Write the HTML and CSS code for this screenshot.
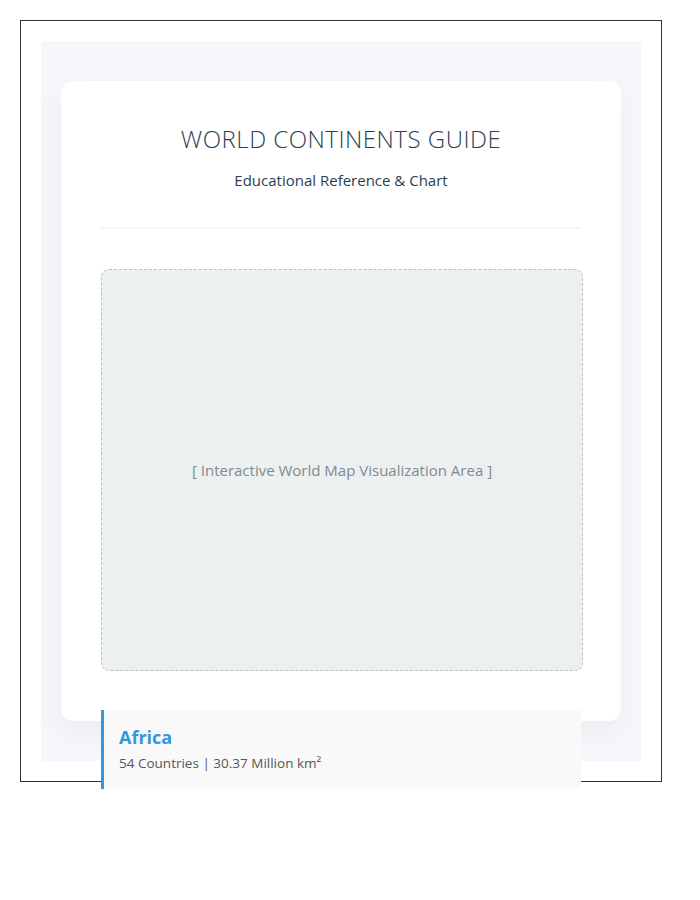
FILE: index.html
```html
<!DOCTYPE html>
<html lang="en">
<head>
    <meta charset="UTF-8">
    <meta name="viewport" content="width=device-width, initial-scale=1.0">
    <title>World Continents Guide</title>
    <link rel="stylesheet" href="styles.css">
</head>
<body>
    <div class="frame">
        <div class="page">
            <div class="guide-card">
                <header class="guide-header">
                    <h1>World Continents Guide</h1>
                    <p class="subtitle">Educational Reference &amp; Chart</p>
                </header>

                <div class="map-area">
                    [ Interactive World Map Visualization Area ]
                </div>

                <div class="continent-item">
                    <h3>Africa</h3>
                    <p>54 Countries | 30.37 Million km²</p>
                </div>
            </div>
        </div>
    </div>
</body>
</html>
```

FILE: styles.css
```css
body {
    font-family: "Open Sans", "Noto Sans", Arial, sans-serif;
    margin: 0;
    padding: 20px;
    background-color: #ffffff;
}

.frame {
    width: 600px;
    height: 720px;
    padding: 20px;
    border: 1px solid #333;
}

.page {
    background-color: #f5f7fa;
    height: 100%;
    padding: 40px 20px;
    box-sizing: border-box;
}

.guide-card {
    background-color: #ffffff;
    height: 100%;
    padding: 40px;
    box-sizing: border-box;
    border-radius: 12px;
    box-shadow: 0 10px 30px rgba(0, 0, 0, 0.05);
}

.guide-header {
    text-align: center;
    padding-bottom: 37px;
    border-bottom: 2px solid #f5f6f7;
    margin-bottom: 40px;
}

.guide-header h1 {
    font-weight: 300;
    font-size: 24px;
    text-transform: uppercase;
    letter-spacing: 0.5px;
    color: #2c3e50;
    margin: 0 0 13px 0;
    line-height: 36px;
}

.subtitle {
    font-size: 15px;
    color: #2c3e50;
    margin: 0;
}

.map-area {
    height: 400px;
    background-color: #ecf0f1;
    border: 1px dashed #bdc3c7;
    border-radius: 8px;
    display: flex;
    justify-content: center;
    align-items: center;
    color: #7f8c8d;
    font-size: 15px;
    margin-bottom: 39px;
    margin-right: -2px;
}

.continent-item {
    background-color: #f9f9f9;
    border-left: 3px solid #3498db;
    padding: 15px 16px 17px 15px;
}

.continent-item h3 {
    margin: 0 0 5px 0;
    color: #3498db;
    font-size: 18px;
    font-weight: 700;
}

.continent-item p {
    margin: 0;
    color: #555;
    font-size: 13.5px;
}
```
